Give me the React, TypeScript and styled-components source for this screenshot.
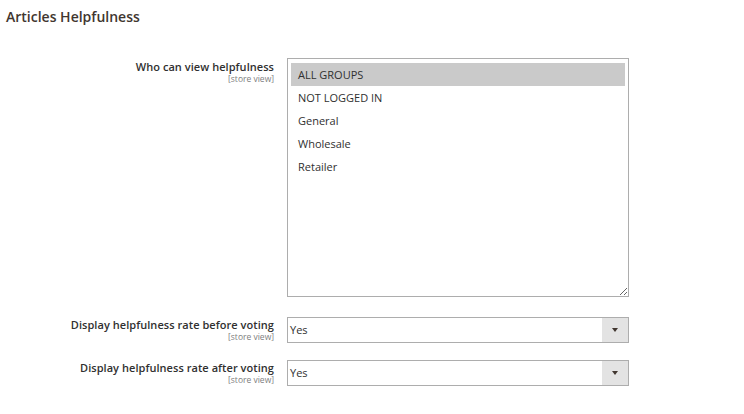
import styled, { createGlobalStyle } from 'styled-components';

const GlobalStyle = createGlobalStyle`
  body {
    margin: 0;
    background: #ffffff;
    font-family: "Open Sans", "Liberation Sans", sans-serif;
    color: #303030;
  }
`;

const Page = styled.div`
  width: 744px;
  height: 414px;
  padding-top: 7px;
  box-sizing: border-box;
`;

const Title = styled.h2`
  margin: 0 0 31px 6px;
  font-size: 14px;
  font-weight: 600;
  line-height: 20px;
  color: #41362f;
`;

const Form = styled.div`
  display: flex;
  flex-direction: column;
`;

const Row = styled.div<{ $gap: number }>`
  display: grid;
  grid-template-columns: 274px 342px;
  column-gap: 13px;
  align-items: start;
  margin-bottom: ${p => p.$gap}px;
`;

const Label = styled.div<{ $offset?: number }>`
  text-align: right;
  padding-top: ${p => p.$offset ?? 0}px;
`;

const LabelText = styled.div`
  font-size: 11px;
  font-weight: 600;
  line-height: 15px;
  letter-spacing: 0.05px;
  color: #303030;
`;

const Scope = styled.div`
  font-size: 8.5px;
  line-height: 10px;
  color: #808080;
`;

const MultiSelect = styled.div`
  height: 239px;
  box-sizing: border-box;
  border: 1px solid #adadad;
  padding: 4px 3px;
  overflow: auto;
  resize: vertical;
`;

const Option = styled.div<{ $selected?: boolean }>`
  height: 23px;
  line-height: 23px;
  padding-left: 7px;
  font-size: 11px;
  color: #303030;
  background: ${p => (p.$selected ? '#cacaca' : 'transparent')};
`;

const Select = styled.div`
  display: flex;
  height: 26px;
  box-sizing: border-box;
  border: 1px solid #adadad;
  background: #ffffff;
`;

const SelectValue = styled.div`
  flex: 1;
  padding-left: 2px;
  font-size: 11px;
  line-height: 24px;
  color: #303030;
`;

const ArrowBox = styled.div`
  width: 26px;
  display: flex;
  align-items: center;
  justify-content: center;
  background: #e3e3e3;
`;

const Arrow = styled.span`
  width: 0;
  height: 0;
  border-left: 3.5px solid transparent;
  border-right: 3.5px solid transparent;
  border-top: 4px solid #41362f;
`;

const groups = ['ALL GROUPS', 'NOT LOGGED IN', 'General', 'Wholesale', 'Retailer'];

const App = () => {
  return (
    <Page>
      <GlobalStyle />
      <Title>Articles Helpfulness</Title>
      <Form>
        <Row $gap={20}>
          <Label $offset={1}>
            <LabelText>Who can view helpfulness</LabelText>
            <Scope>[store view]</Scope>
          </Label>
          <MultiSelect>
            {groups.map((g, i) => (
              <Option key={g} $selected={i === 0}>{g}</Option>
            ))}
          </MultiSelect>
        </Row>
        <Row $gap={17}>
          <Label>
            <LabelText>Display helpfulness rate before voting</LabelText>
            <Scope>[store view]</Scope>
          </Label>
          <Select>
            <SelectValue>Yes</SelectValue>
            <ArrowBox><Arrow /></ArrowBox>
          </Select>
        </Row>
        <Row $gap={0}>
          <Label>
            <LabelText>Display helpfulness rate after voting</LabelText>
            <Scope>[store view]</Scope>
          </Label>
          <Select>
            <SelectValue>Yes</SelectValue>
            <ArrowBox><Arrow /></ArrowBox>
          </Select>
        </Row>
      </Form>
    </Page>
  );
};

export default App;
